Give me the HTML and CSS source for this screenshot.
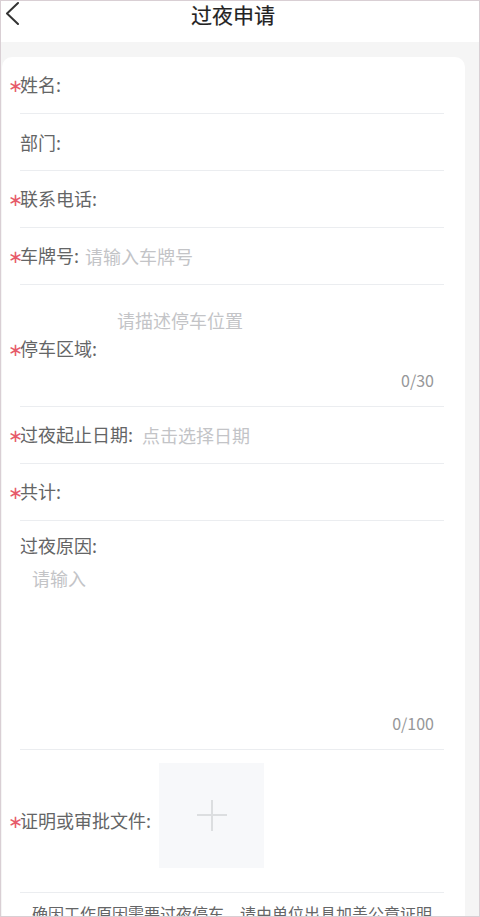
FILE: index.html
```html
<!DOCTYPE html>
<html lang="zh-CN">
<head>
    <meta charset="UTF-8">
    <meta name="viewport" content="width=device-width, initial-scale=1.0">
    <title>过夜申请</title>
    <link rel="stylesheet" href="styles.css">
</head>
<body>
    <div class="screen">
        <header class="nav-bar">
            <a class="back" href="#">
                <svg width="24" height="24" viewBox="0 0 24 24">
                    <polyline points="17,2 6,12.5 17,23" fill="none" stroke="#333" stroke-width="2" stroke-linecap="round" stroke-linejoin="round"/>
                </svg>
            </a>
            <h1 class="title">过夜申请</h1>
        </header>

        <main class="page">
            <form class="card" id="night-form">
                <div class="field">
                    <label class="label required" for="name">姓名:</label>
                    <input class="field-input" type="text" id="name">
                </div>
                <div class="field">
                    <label class="label" for="dept">部门:</label>
                    <input class="field-input" type="text" id="dept">
                </div>
                <div class="field">
                    <label class="label required" for="phone">联系电话:</label>
                    <input class="field-input" type="tel" id="phone">
                </div>
                <div class="field">
                    <label class="label required" for="plate">车牌号:</label>
                    <input class="field-input" type="text" id="plate" placeholder="请输入车牌号">
                </div>
                <div class="field field-area">
                    <label class="label required" for="area">停车区域:</label>
                    <div class="area-body">
                        <textarea class="area-input" id="area" maxlength="30" placeholder="请描述停车位置"></textarea>
                        <div class="counter">0/30</div>
                    </div>
                </div>
                <div class="field">
                    <label class="label required" for="date">过夜起止日期:</label>
                    <input class="field-input date-input" type="text" id="date" placeholder="点击选择日期" readonly>
                </div>
                <div class="field">
                    <label class="label required" for="total">共计:</label>
                    <input class="field-input" type="text" id="total" readonly>
                </div>
                <div class="field field-reason">
                    <label class="label" for="reason">过夜原因:</label>
                    <textarea class="reason-input" id="reason" maxlength="100" placeholder="请输入"></textarea>
                    <div class="counter">0/100</div>
                </div>
                <div class="field">
                    <span class="label required">证明或审批文件:</span>
                    <div class="uploader">
                        <svg width="30" height="32" viewBox="0 0 30 32">
                            <line x1="0" y1="15" x2="30" y2="15" stroke="#dcdee0" stroke-width="2"/>
                            <line x1="15" y1="0" x2="15" y2="31" stroke="#dcdee0" stroke-width="2"/>
                        </svg>
                    </div>
                </div>
                <p class="notice">确因工作原因需要过夜停车，请由单位出具加盖公章证明</p>
            </form>
        </main>
    </div>
</body>
</html>
```

FILE: styles.css
```css
* {
    box-sizing: border-box;
}

html, body {
    margin: 0;
    height: 100%;
}

body {
    font-family: "Noto Sans CJK SC", "Noto Sans", sans-serif;
    background-color: #fff;
}

.screen {
    height: 100vh;
    border: 1px solid #d9cfd4;
    background-color: #f5f5f5;
    display: flex;
    flex-direction: column;
    overflow: hidden;
}

.nav-bar {
    flex-shrink: 0;
    height: 41px;
    background-color: #fff;
    display: grid;
    grid-template-columns: 1fr auto 1fr;
    align-items: start;
    padding-right: 14px;
}

.back {
    display: block;
    width: 24px;
    height: 24px;
}

.back svg {
    display: block;
}

.title {
    margin: 0;
    font-size: 21px;
    font-weight: 400;
    line-height: 26px;
    color: #222;
    -webkit-text-stroke: 0.2px #222;
}

.page {
    flex: 1;
    padding: 15px 14px 0 1px;
}

.card {
    background-color: #fff;
    border-radius: 10px 10px 0 0;
    padding: 0 21px 0 18px;
    margin: 0;
    min-height: 100%;
}

.field {
    display: flex;
    align-items: center;
    min-height: 57px;
    border-bottom: 1px solid #ebedf0;
    font-size: 18px;
    line-height: 24px;
    color: #646566;
}

.label {
    flex-shrink: 0;
    white-space: nowrap;
}

.required::before {
    content: "∗";
    display: inline-block;
    width: 12px;
    margin-left: -12px;
    font-family: "DejaVu Sans", sans-serif;
    font-size: 18px;
    color: #e65a6a;
}

.field-input {
    flex: 1;
    min-width: 0;
    margin-left: 6px;
    padding: 0;
    border: none;
    outline: none;
    background: transparent;
    font: inherit;
    color: #323233;
}

.date-input {
    margin-left: 9px;
}

.field-input::placeholder,
.area-input::placeholder,
.reason-input::placeholder {
    color: #c3c4c7;
}

.area-input,
.reason-input {
    display: block;
    width: 100%;
    padding: 0;
    border: none;
    outline: none;
    resize: none;
    background: transparent;
    font: inherit;
    color: #323233;
}

.field-area {
    padding: 23px 0 16px;
}

.area-body {
    flex: 1;
    margin: 0 10px 0 20px;
}

.area-input {
    height: 58px;
}

.counter {
    margin-top: 4px;
    text-align: right;
    font-size: 16px;
    line-height: 20px;
    color: #969799;
}

.field-reason {
    display: block;
    padding: 12px 10px 16px 0;
}

.field-reason .label {
    display: block;
}

.reason-input {
    margin: 9px 0 0 12px;
    width: calc(100% - 12px);
    height: 143px;
}

.uploader {
    width: 105px;
    height: 105px;
    margin: 13px 0 24px 8px;
    background-color: #f7f8fa;
    display: flex;
    align-items: center;
    justify-content: center;
}

.notice {
    margin: 0;
    padding-top: 8px;
    text-align: center;
    font-size: 16px;
    line-height: 24px;
    color: #646566;
}
```
